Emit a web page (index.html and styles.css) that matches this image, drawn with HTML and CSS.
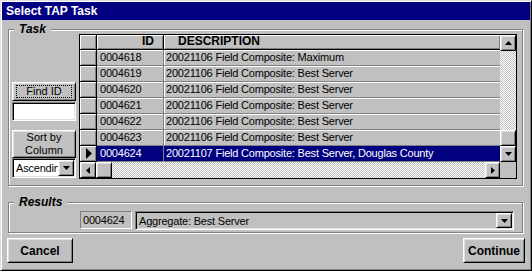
FILE: index.html
```html
<!DOCTYPE html>
<html lang="en">

<head>
  <meta charset="UTF-8">
  <title>Select TAP Task</title>
  <link rel="stylesheet" href="styles.css">
</head>

<body>
  <div class="window">
    <div class="titlebar">Select TAP Task</div>
    <div class="content">

      <div class="group group-task">
        <div class="group-label">Task</div>
        <div class="task-body">
          <div class="side">
            <div class="btn btn-find"><span class="focus">Find ID</span></div>
            <div class="textbox"></div>
            <div class="btn btn-sort">Sort by<br>Column</div>
            <div class="combo combo-white">
              <span class="combo-text">Ascending</span>
              <span class="btn drop">
                <svg width="7" height="4"><polygon points="0,0 7,0 3.5,4" /></svg>
              </span>
            </div>
          </div>

          <div class="datasheet">
            <div class="sheet-main">
              <div class="row head">
                <div class="sel"></div>
                <div class="cell id">ID</div>
                <div class="cell desc">DESCRIPTION</div>
              </div>
              <div class="row">
                <div class="sel"></div>
                <div class="cell id">0004618</div>
                <div class="cell desc">20021106 Field Composite: Maximum</div>
              </div>
              <div class="row">
                <div class="sel"></div>
                <div class="cell id">0004619</div>
                <div class="cell desc">20021106 Field Composite: Best Server</div>
              </div>
              <div class="row">
                <div class="sel"></div>
                <div class="cell id">0004620</div>
                <div class="cell desc">20021106 Field Composite: Best Server</div>
              </div>
              <div class="row">
                <div class="sel"></div>
                <div class="cell id">0004621</div>
                <div class="cell desc">20021106 Field Composite: Best Server</div>
              </div>
              <div class="row">
                <div class="sel"></div>
                <div class="cell id">0004622</div>
                <div class="cell desc">20021106 Field Composite: Best Server</div>
              </div>
              <div class="row">
                <div class="sel"></div>
                <div class="cell id">0004623</div>
                <div class="cell desc">20021106 Field Composite: Best Server</div>
              </div>
              <div class="row selected">
                <div class="sel">
                  <svg width="6" height="11"><polygon points="0,0 6,5.5 0,11" /></svg>
                </div>
                <div class="cell id">0004624</div>
                <div class="cell desc">20021107 Field Composite: Best Server, Douglas County</div>
              </div>
            </div>

            <div class="vscroll">
              <div class="btn sbtn">
                <svg width="7" height="4"><polygon points="3.5,0 7,4 0,4" /></svg>
              </div>
              <div class="track track-v">
                <div class="btn thumb"></div>
              </div>
              <div class="btn sbtn">
                <svg width="7" height="4"><polygon points="0,0 7,0 3.5,4" /></svg>
              </div>
            </div>

            <div class="hscroll">
              <div class="btn sbtn">
                <svg width="4" height="7"><polygon points="4,0 4,7 0,3.5" /></svg>
              </div>
              <div class="btn thumb"></div>
              <div class="track"></div>
              <div class="btn sbtn sbtn-right">
                <svg width="4" height="7"><polygon points="0,0 4,3.5 0,7" /></svg>
              </div>
            </div>

            <div class="corner"></div>
          </div>
        </div>
      </div>

      <div class="group group-results">
        <div class="group-label">Results</div>
        <div class="results-body">
          <div class="idfield">0004624</div>
          <div class="combo combo-grey">
            <span class="combo-text">Aggregate: Best Server</span>
            <span class="btn drop">
              <svg width="7" height="4"><polygon points="0,0 7,0 3.5,4" /></svg>
            </span>
          </div>
        </div>
      </div>

      <div class="footer">
        <div class="btn btn-big btn-cancel">Cancel</div>
        <div class="btn btn-big btn-continue">Continue</div>
      </div>

    </div>
  </div>
</body>

</html>
```

FILE: styles.css
```css
body {
  margin: 0;
  font-family: "Liberation Sans", Arial, sans-serif;
  font-size: 11px;
  color: #000;
}

/* window frame */

.window {
  box-sizing: border-box;
  width: 532px;
  height: 271px;
  padding: 1px;
  background-color: #c0c0c0;
  border: 1px solid;
  border-color: #dfdfdf #000 #000 #dfdfdf;
  box-shadow: inset 1px 1px #fff, inset -1px -1px #808080;
}

.titlebar {
  height: 18px;
  line-height: 18px;
  padding-left: 4px;
  background-color: #000080;
  color: #fff;
  font-size: 12px;
  font-weight: bold;
}

.content {
  padding: 9px 7px 0 6px;
}

/* group boxes */

.group {
  box-sizing: border-box;
  border: 1px solid #808080;
  box-shadow: inset 1px 1px #fff, 1px 1px #fff;
}

.group-task {
  height: 157px;
}

.group-results {
  height: 31px;
  margin-top: 16px;
}

.group-label {
  width: fit-content;
  height: 14px;
  line-height: 14px;
  margin: -8px 0 -2px 5px;
  padding: 0 5px;
  background-color: #c0c0c0;
  font-size: 12px;
  font-weight: bold;
  font-style: italic;
}

.task-body {
  display: flex;
  gap: 3px;
  height: 145px;
  padding: 0 5px 0 3px;
}

.results-body {
  display: flex;
  align-items: flex-start;
  gap: 3px;
  padding: 4px 8px 0 71px;
}

/* buttons */

.btn {
  box-sizing: border-box;
  display: flex;
  align-items: center;
  justify-content: center;
  background-color: #c0c0c0;
  border: 1px solid;
  border-color: #fff #000 #000 #fff;
  box-shadow: inset 1px 1px #dfdfdf, inset -1px -1px #808080;
}

.side {
  box-sizing: border-box;
  display: flex;
  flex-direction: column;
  justify-content: flex-end;
  width: 64px;
  padding-bottom: 1px;
}

.btn-find {
  height: 19px;
}

.focus {
  box-sizing: border-box;
  width: 56px;
  height: 13px;
  line-height: 11px;
  border: 1px dotted #000;
  text-align: center;
}

.textbox {
  box-sizing: border-box;
  height: 19px;
  margin-top: 1px;
  background-color: #fff;
  border: 1px solid;
  border-color: #808080 #fff #fff #808080;
  box-shadow: inset 1px 1px #000, inset -1px -1px #dfdfdf;
}

.btn-sort {
  height: 28px;
  margin-top: 9px;
  line-height: 13px;
  text-align: center;
}

.combo {
  box-sizing: border-box;
  display: flex;
  align-items: center;
  padding: 1px;
  border: 1px solid;
  border-color: #808080 #fff #fff #808080;
  box-shadow: inset 1px 1px #000, inset -1px -1px #dfdfdf;
}

.combo-white {
  height: 20px;
  background-color: #fff;
}

.combo-grey {
  flex: 1;
  height: 19px;
  background-color: #c0c0c0;
}

.combo-text {
  flex: 1;
  overflow: hidden;
  white-space: nowrap;
  padding-left: 2px;
  letter-spacing: -0.2px;
}

.drop {
  width: 16px;
  height: 15px;
  flex-shrink: 0;
}

.combo-white .drop {
  height: 16px;
}

.idfield {
  box-sizing: border-box;
  width: 52px;
  height: 18px;
  line-height: 16px;
  padding-left: 2px;
  border: 1px solid;
  border-color: #808080 #fff #fff #808080;
  letter-spacing: -0.2px;
}

.footer {
  display: flex;
  justify-content: space-between;
  margin: 5px -2px 0 -1px;
}

.btn-big {
  height: 25px;
  font-size: 12px;
  font-weight: bold;
}

.btn-cancel {
  width: 66px;
}

.btn-continue {
  width: 62px;
}

/* datasheet */

.datasheet {
  display: grid;
  grid-template-columns: 420px 16px;
  grid-template-rows: 127px 16px;
  width: 438px;
  height: 145px;
  box-sizing: border-box;
  border: 1px solid #000;
}

.row {
  display: flex;
  height: 16px;
}

.head {
  height: 15px;
}

.sel {
  box-sizing: border-box;
  display: flex;
  align-items: center;
  justify-content: center;
  width: 17px;
  padding-left: 1px;
  border-right: 1px solid #000;
  border-bottom: 1px solid #000;
  box-shadow: inset 1px 1px #fff, inset -1px -1px #808080;
}

.cell {
  box-sizing: border-box;
  line-height: 14px;
  white-space: nowrap;
  overflow: hidden;
  letter-spacing: -0.2px;
  border-bottom: 1px solid #808080;
  box-shadow: inset 0 1px #fff;
}

.cell.id {
  width: 67px;
  padding-left: 3px;
  border-right: 1px solid #808080;
}

.cell.desc {
  flex: 1;
  padding-left: 2px;
  box-shadow: inset 1px 1px #fff;
}

.head .cell {
  font-size: 12px;
  font-weight: bold;
  letter-spacing: 0;
  line-height: 13px;
  border-right: 1px solid #000;
  border-bottom: 1px solid #000;
  box-shadow: inset 1px 1px #fff, inset -1px -1px #808080;
}

.head .cell.id {
  text-align: right;
  padding-right: 9px;
}

.head .cell.desc {
  padding-left: 14px;
  border-right: 0;
}

.selected .cell {
  background-color: #000080;
  color: #fff;
  box-shadow: none;
}

.vscroll {
  display: flex;
  flex-direction: column;
}

.hscroll {
  display: flex;
}

.sbtn {
  width: 16px;
  height: 16px;
  flex-shrink: 0;
}

.sbtn-right {
  width: 15px;
}

.thumb {
  width: 16px;
  height: 16px;
  flex-shrink: 0;
}

.track {
  flex: 1;
  background: repeating-conic-gradient(#c0c0c0 0 25%, #fff 0 50%) 0 0 / 2px 2px;
}

.track-v {
  display: flex;
  flex-direction: column;
  justify-content: flex-end;
}

.corner {
  background-color: #c0c0c0;
}
```
